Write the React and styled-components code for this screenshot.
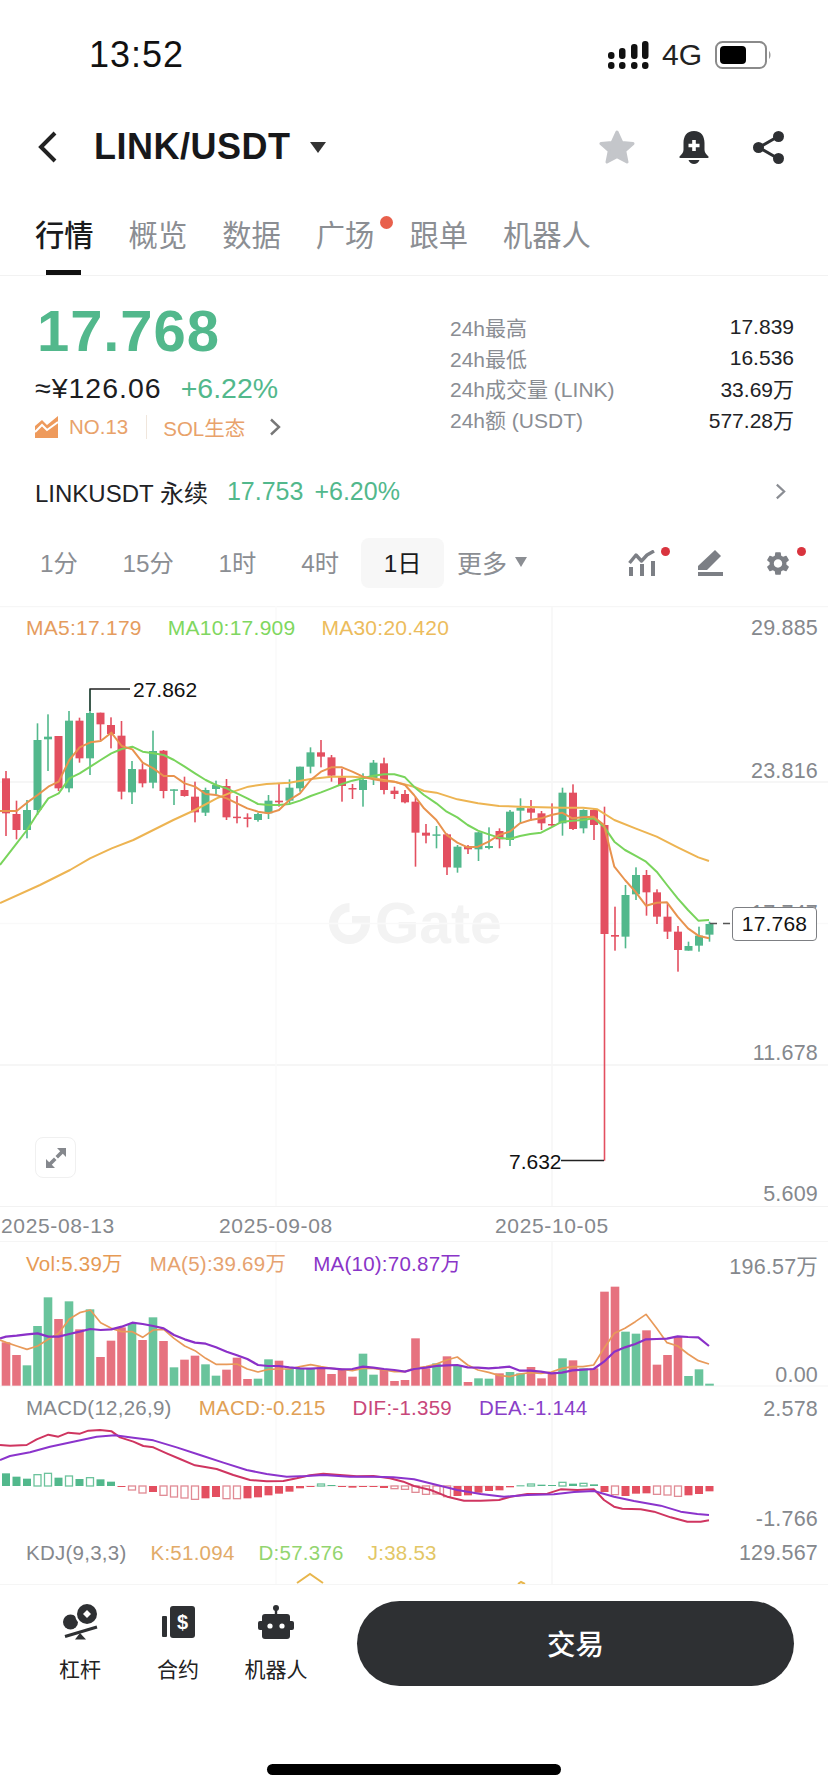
import React from "react";
import styled, { createGlobalStyle } from "styled-components";
import { MdSettings } from "react-icons/md";

const FONT = `"Liberation Sans", "Noto Sans CJK SC", sans-serif`;
const GREEN = "#52b88c";
const RED = "#e34f60";
const AXIS = "#85888d";
const DARK = "#2e3033";

// points were read off 3x crops of the chart, so convert them back to pane coordinates
const crop = (pts, dx, dy) => pts.map(([x, y]) => [x / 3 + dx, y / 3 + dy]);
const toPoints = (pts) => pts.map((p) => p.join(",")).join(" ");
const barX = (i) => 6 + 10.5 * i;

// high, body top, body bottom, low, up?
const candlesLeft = [
  [483, 505, 610, 678, 0], [572, 612, 660, 688, 0], [570, 600, 660, 685, 1], [340, 390, 600, 615, 1],
  [313, 380, 388, 483, 1], [378, 378, 535, 543, 0], [303, 332, 535, 547, 1], [323, 332, 445, 458, 0],
  [237, 309, 445, 495, 1], [308, 308, 343, 390, 0], [322, 345, 372, 415, 0], [333, 377, 545, 568, 0],
  [453, 477, 547, 582, 1], [460, 478, 520, 532, 0], [362, 423, 518, 535, 1], [420, 422, 543, 565, 0],
  [538, 538, 542, 585, 1], [500, 540, 558, 560, 0], [515, 560, 607, 637, 0], [533, 540, 608, 618, 1],
  [512, 525, 537, 552, 1], [507, 528, 622, 630, 0], [558, 620, 624, 640, 0], [610, 622, 627, 652, 0],
  [608, 612, 630, 635, 1], [555, 572, 610, 627, 1], [522, 572, 577, 590, 0], [508, 533, 572, 583, 1],
  [470, 470, 535, 545, 1], [412, 427, 470, 490, 1], [390, 427, 440, 472, 0], [435, 442, 497, 515, 0],
  [476, 502, 528, 575, 0], [522, 534, 538, 567, 0], [490, 510, 540, 590, 1], [450, 458, 505, 525, 1],
  [443, 460, 540, 553, 0], [530, 542, 552, 567, 0], [540, 552, 577, 580, 0],
];
const candlesRight = [
  [170, 185, 278, 380, 0], [252, 278, 287, 310, 0], [258, 283, 286, 325, 1], [280, 283, 382, 405, 0],
  [315, 320, 383, 398, 1], [315, 318, 328, 342, 0], [275, 277, 328, 363, 1], [262, 318, 324, 328, 1],
  [265, 273, 298, 325, 0], [210, 215, 300, 318, 1], [175, 203, 212, 250, 1], [180, 205, 218, 242, 0],
  [213, 220, 250, 270, 0], [190, 252, 255, 260, 0], [143, 158, 250, 287, 1], [133, 158, 267, 270, 0],
  [208, 210, 265, 280, 1], [205, 210, 255, 300, 0], [200, 255, 582, 1262, 0], [500, 585, 590, 632, 0],
  [435, 465, 590, 625, 1], [382, 405, 463, 480, 1], [390, 405, 457, 527, 0], [448, 457, 530, 552, 0],
  [490, 530, 575, 597, 0], [558, 575, 630, 695, 0], [605, 618, 632, 632, 1], [560, 587, 617, 635, 1],
  [545, 552, 584, 605, 1],
];
const candles = [
  ...candlesLeft.map((c) => [...c.slice(0, 4).map((v) => 4 + v / 3), c[4]]),
  ...candlesRight.map((c) => [...c.slice(0, 4).map((v) => 134 + v / 3), c[4]]),
];

const ma5 = [
  ...crop([[0,603],[50,603],[81,578],[113,555],[145,530],[176,515],[208,450],[239,412],[271,397],[302,393],[334,368],[365,408],[397,418],[428,458],[460,475],[491,498],[522,498],[554,520],[585,530],[617,552],[648,555],[680,565],[711,580],[742,595],[774,605],[805,610],[837,600],[868,570],[900,550],[932,510],[963,485],[994,472],[1026,472],[1057,485],[1089,500],[1120,508],[1152,513],[1183,515],[1215,525]], 0, 4),
  ...crop([[0,165],[30,205],[67,240],[98,285],[130,308],[161,322],[192,320],[224,305],[255,285],[287,275],[318,250],[349,240],[381,235],[412,225],[444,218],[475,235],[507,232],[539,230],[570,255],[601,380],[633,420],[664,455],[696,497],[728,488],[759,487],[791,530],[822,565],[853,587],[885,595]], 414, 134),
];
const ma10 = [
  ...crop([[0,765],[50,700],[81,660],[113,610],[145,565],[176,550],[208,505],[239,490],[271,470],[302,450],[334,430],[365,417],[397,410],[428,425],[460,430],[491,435],[522,450],[554,470],[585,490],[617,510],[648,525],[680,535],[711,550],[742,565],[774,582],[805,585],[837,585],[868,582],[900,572],[932,558],[963,547],[994,535],[1026,522],[1057,512],[1089,505],[1120,497],[1152,493],[1183,493],[1215,502]], 0, 4),
  ...crop([[0,140],[30,165],[67,190],[98,215],[130,232],[161,255],[192,272],[224,283],[255,293],[287,297],[318,288],[349,282],[381,278],[412,262],[444,245],[475,242],[507,240],[539,235],[570,260],[601,305],[633,330],[664,347],[696,365],[728,395],[759,435],[791,475],[822,510],[853,542],[885,540]], 414, 134),
];
const ma30 = [
  [0, 297], [40, 279], [70, 264],
  ...crop([[270,745],[335,715],[400,690],[460,660],[520,630],[585,600],[650,565],[700,545],[745,530],[800,522],[868,518],[932,507],[994,500],[1057,500],[1120,505],[1183,515]], 0, 4),
  ...crop([[0,140],[30,153],[67,158],[130,178],[192,190],[255,198],[318,200],[381,202],[444,203],[507,203],[550,208],[601,240],[664,265],[728,290],[791,322],[853,352],[885,363]], 414, 134),
];

// top of each volume bar, up?
const volumes = [
  [367,0],[405,0],[436,1],[318,1],[232,1],[297,0],[244,1],[328,0],[268,1],[411,0],[362,0],[322,0],[312,1],[360,0],[292,1],[363,0],[442,1],[419,0],[407,0],[433,1],[467,1],[449,0],[413,0],[477,0],[476,1],[418,1],[422,0],[447,1],[447,1],[447,1],[442,0],[462,0],[447,0],[470,0],[401,1],[464,1],[450,0],[483,0],[480,0],
  [355,0],[445,0],[430,1],[409,0],[437,1],[486,0],[475,1],[476,1],[460,0],[456,1],[460,1],[441,0],[475,0],[462,0],[415,1],[421,0],[445,1],[445,0],[215,0],[200,0],[335,1],[341,1],[331,0],[434,0],[405,0],[350,0],[468,1],[448,1],[491,1],
];
const volMa5 = [
  ...crop([[0,360],[18,367],[50,378],[81,388],[113,378],[145,358],[176,340],[208,297],[239,278],[271,270],[302,308],[334,325],[365,335],[397,335],[428,352],[460,330],[491,328],[522,355],[554,378],[585,392],[617,415],[648,433],[680,433],[711,432],[742,447],[774,456],[805,448],[837,447],[868,447],[900,440],[932,434],[963,440],[994,445],[1026,448],[1057,452],[1089,445],[1120,445],[1152,450],[1183,455],[1215,455]], 0, -22),
  ...crop([[0,445],[36,440],[67,432],[98,420],[130,411],[161,435],[192,450],[224,457],[255,466],[287,470],[318,462],[349,458],[381,460],[412,456],[444,445],[475,440],[507,440],[539,435],[570,385],[601,340],[633,325],[664,305],[696,283],[728,325],[759,368],[791,378],[822,402],[853,422],[885,432]], 414, -22),
];
const volMa10 = [
  ...crop([[0,355],[18,350],[50,347],[81,343],[113,340],[145,350],[176,350],[208,342],[239,335],[271,327],[302,330],[334,328],[365,320],[397,308],[428,312],[460,318],[491,325],[522,345],[554,358],[585,368],[617,371],[648,382],[680,395],[711,406],[742,417],[774,435],[805,438],[837,438],[868,442],[900,445],[932,446],[963,444],[994,445],[1026,448],[1057,447],[1089,440],[1120,443],[1152,447],[1183,450],[1215,455]], 0, -22),
  ...crop([[0,447],[36,443],[67,438],[98,436],[130,435],[161,442],[192,443],[224,445],[255,443],[287,440],[318,452],[349,452],[381,455],[412,460],[444,458],[475,451],[507,449],[539,447],[570,425],[601,395],[633,382],[664,372],[696,358],[728,357],[759,356],[791,349],[822,351],[853,352],[885,378]], 414, -22),
];

// macd histogram: far end of each bar from the zero line (288), hollow?
const macdBars = [
  [250],[260],[266],[254,1],[250,1],[263],[258,1],[267],[263,1],[268],[275],[291],[300,1],[309,1],[306],[316,1],[321,1],[324,1],[328,1],[325],[321],[326,1],[326,1],[325],[322],[316],[311],[305],[295],
  [288],[282,1],[285],[288],[293],[291],[288],[294],[296,1],[298,1],[307,1],[313,1],[312,1],[320,1],[318],[316],[308],[303],[301],[292],[286],[282,1],[284],[285],[277,1],[281],[280,1],[283],[306],[314,1],[318],[311],[310],[313,1],[315,1],[319,1],[316],[312],[304],
];
const dif = [
  ...crop([[0,165],[30,167],[80,165],[110,148],[145,134],[175,140],[205,128],[240,131],[265,122],[300,120],[335,124],[360,142],[400,155],[430,168],[460,172],[500,190],[540,207],[585,226],[620,232],[650,237],[700,255],[750,270],[800,274],[850,273],[890,265],[930,256],[970,251],[1020,255],[1070,259],[1120,258],[1170,265],[1210,275]], 0, 0),
  ...crop([[0,288],[50,300],[100,320],[150,332],[200,332],[255,330],[290,320],[340,312],[400,311],[440,298],[490,300],[540,298],[570,330],[600,350],[625,356],[680,358],[720,365],[770,382],[820,395],[860,395],[885,391]], 414, 0),
];
const dea = [
  ...crop([[0,210],[30,198],[90,187],[150,170],[220,155],[290,140],[345,136],[400,143],[460,151],[530,172],[600,195],[670,218],[740,240],[800,252],[860,260],[920,258],[970,255],[1050,260],[1120,260],[1180,262]], 0, 0),
  ...crop([[0,268],[60,283],[130,300],[200,312],[270,320],[340,315],[420,313],[480,306],[540,303],[600,320],[660,333],[740,347],[800,365],[850,372],[885,375]], 414, 0),
];

const Global = createGlobalStyle`
  html, body { margin: 0; padding: 0; background: #fff; }
  * { box-sizing: border-box; }
`;

const Page = styled.div`
  position: relative;
  width: 828px;
  height: 1792px;
  overflow: hidden;
  background: #fff;
  font-family: ${FONT};
  color: #1f2124;
  display: flex;
  flex-direction: column;
`;

/* status bar */
const StatusBar = styled.div`
  height: 110px;
  padding: 0 56px 0 89px;
  display: flex;
  align-items: center;
  justify-content: space-between;
`;
const Clock = styled.div`
  font-size: 36px;
  letter-spacing: 1px;
  color: #111;
`;
const StatusRight = styled.div`
  display: flex;
  align-items: center;
  gap: 13px;
`;
const Network = styled.div`
  font-size: 30px;
  color: #222;
`;

/* nav */
const NavBar = styled.div`
  height: 74px;
  padding: 0 44px 0 37px;
  display: flex;
  align-items: center;
`;
const Title = styled.div`
  margin-left: 37px;
  font-size: 36px;
  font-weight: 700;
  letter-spacing: 0.5px;
  color: #17181a;
`;
const NavCaret = styled.svg`
  margin-left: 19px;
`;
const NavActions = styled.div`
  margin-left: auto;
  display: flex;
  align-items: center;
  gap: 44px;
`;

/* tabs */
const Tabs = styled.div`
  height: 92px;
  padding-left: 35px;
  display: flex;
  gap: 35px;
  border-bottom: 1px solid #f2f2f2;
`;
const Tab = styled.div`
  position: relative;
  padding-top: 32px;
  font-size: 29.3px;
  line-height: 40px;
  color: ${(p) => (p.$active ? "#1a1b1d" : "#8b8e93")};
  font-weight: ${(p) => (p.$active ? 500 : 400)};

  ${(p) =>
    p.$active &&
    `&::after {
      content: "";
      position: absolute;
      left: 11px;
      bottom: 0;
      width: 35px;
      height: 5px;
      background: #111;
    }`}
`;
const TabDot = styled.span`
  position: absolute;
  top: 32px;
  right: -19px;
  width: 13px;
  height: 13px;
  border-radius: 50%;
  background: #e8604c;
`;

/* summary */
const Summary = styled.div`
  height: 186px;
  padding: 0 34px 0 35px;
  display: flex;
  justify-content: space-between;
`;
const PriceBlock = styled.div`
  padding-top: 28px;
`;
const BigPrice = styled.div`
  margin-left: 2px;
  font-size: 58px;
  line-height: 54px;
  font-weight: 700;
  letter-spacing: 0.9px;
  color: ${GREEN};
`;
const SubPrice = styled.div`
  margin-top: 12px;
  height: 36px;
  display: flex;
  align-items: center;
  gap: 19px;
  font-size: 28.5px;
`;
const Cny = styled.span`
  letter-spacing: 1px;
  color: #1c1d1f;
`;
const Change = styled.span`
  color: ${GREEN};
`;
const TagRow = styled.div`
  margin-top: 6px;
  height: 30px;
  display: flex;
  align-items: center;
  font-size: 20.5px;
  color: #e8a26b;
`;
const TagRank = styled.span`
  margin-left: 11px;
`;
const TagDivider = styled.span`
  width: 1px;
  height: 24px;
  margin: 0 16px 0 18px;
  background: #f0e6dc;
`;
const TagChevron = styled.svg`
  margin-left: 24px;
`;
const Stats = styled.div`
  width: 344px;
  padding-top: 35.5px;
`;
const StatRow = styled.div`
  height: 30.7px;
  display: flex;
  align-items: center;
  justify-content: space-between;
  font-size: 21px;
`;
const StatLabel = styled.span`
  color: #8a8d93;
`;
const StatValue = styled.span`
  color: #212225;
`;

/* perpetual link */
const PerpRow = styled.div`
  height: 60px;
  padding: 0 42px 2px 35px;
  display: flex;
  align-items: center;
  font-size: 25px;
`;
const PerpName = styled.span`
  font-size: 24px;
  color: #212225;
`;
const PerpPrice = styled.span`
  margin-left: ${(p) => p.$gap}px;
  color: ${GREEN};
`;
const PerpChevron = styled.svg`
  margin-left: auto;
`;

/* timeframes */
const TimeBar = styled.div`
  height: 84px;
  padding: 0 36px 2px 17.5px;
  display: flex;
  align-items: center;
`;
const TimeItem = styled.div`
  height: 50px;
  padding: 0 22.4px 3px;
  display: flex;
  align-items: center;
  font-size: 24.3px;
  border-radius: 8px;
  color: ${(p) => (p.$active ? "#1a1b1d" : "#8b8e93")};
  background: ${(p) => (p.$active ? "#f7f7f7" : "transparent")};
`;
const MoreItem = styled.div`
  margin-left: 13px;
  padding-bottom: 3px;
  display: flex;
  align-items: center;
  gap: 8px;
  font-size: 25px;
  color: #8b8e93;
`;
const TimeTools = styled.div`
  margin-left: auto;
  display: flex;
  align-items: center;
  gap: 40px;
`;
const ToolSlot = styled.div`
  position: relative;
  width: 28px;
  height: 28px;
  display: flex;
  align-items: center;
  justify-content: center;
  color: #7c7f85;
`;
const RedDot = styled.span`
  position: absolute;
  top: -2px;
  right: -14px;
  width: 9px;
  height: 9px;
  border-radius: 50%;
  background: #d9343e;
`;

/* chart panes */
const Charts = styled.div`
  height: 978px;
  overflow: hidden;
`;
const Pane = styled.div`
  position: relative;
  height: ${(p) => p.$height}px;
  padding-top: ${(p) => p.$top}px;
`;
const PaneSvg = styled.svg`
  position: absolute;
  left: 0;
  top: 0;
`;
const Legend = styled.div`
  position: relative;
  padding-left: 26px;
  display: flex;
  gap: ${(p) => p.$gap}px;
  font-size: ${(p) => p.$size}px;
  line-height: 24px;
  letter-spacing: 0.25px;
`;
const LegendItem = styled.span`
  color: ${(p) => p.$color};
`;
const AxisLabel = styled.div`
  position: absolute;
  right: 10px;
  top: ${(p) => p.$y}px;
  transform: translateY(-50%);
  font-size: 21.5px;
  letter-spacing: 0.2px;
  color: ${AXIS};
`;
const Callout = styled.div`
  position: absolute;
  left: ${(p) => p.$x}px;
  top: ${(p) => p.$y}px;
  transform: translateY(-50%);
  font-size: 21px;
  color: #111;
`;
const PriceTag = styled.div`
  position: absolute;
  left: 732px;
  top: 301px;
  width: 85px;
  height: 34px;
  display: flex;
  align-items: center;
  justify-content: center;
  background: #fff;
  border: 1px solid #7d7f83;
  border-radius: 4px;
  font-size: 21px;
  letter-spacing: 0.2px;
  color: #111;
`;
const Watermark = styled.div`
  position: absolute;
  left: 329px;
  top: 286px;
  display: flex;
  align-items: center;
  gap: 5px;
  font-size: 57px;
  font-weight: 700;
  line-height: 62px;
  color: #f3f3f3;
`;
const ExpandButton = styled.div`
  position: absolute;
  left: 35px;
  top: 531px;
  width: 41px;
  height: 41px;
  display: flex;
  align-items: center;
  justify-content: center;
  background: #fff;
  border: 1.5px solid #f0f0f0;
  border-radius: 8px;
`;
const DateAxis = styled.div`
  position: relative;
  height: 36px;
  border-top: 1px solid #f2f2f2;
  border-bottom: 1px solid #f5f5f5;
`;
const DateLabel = styled.span`
  position: absolute;
  left: ${(p) => p.$x}px;
  top: 6px;
  font-size: 21px;
  line-height: 26px;
  letter-spacing: 0.65px;
  color: ${AXIS};
`;

/* bottom bar */
const BottomBar = styled.div`
  flex: 1;
  border-top: 1px solid #f5f5f5;
  display: flex;
  flex-direction: column;
  align-items: center;
`;
const BottomRow = styled.div`
  width: 100%;
  padding: 16px 0 0 31px;
  display: flex;
`;
const Action = styled.div`
  width: 98px;
  display: flex;
  flex-direction: column;
  align-items: center;
`;
const ActionIcon = styled.div`
  height: 42px;
  display: flex;
  align-items: center;
`;
const ActionLabel = styled.div`
  margin-top: 13px;
  font-size: 21px;
  line-height: 28px;
  color: #222;
  white-space: nowrap;
`;
const TradeButton = styled.div`
  width: 437px;
  height: 85px;
  margin-left: 32px;
  padding-bottom: 3px;
  display: flex;
  align-items: center;
  justify-content: center;
  border-radius: 43px;
  background: ${DARK};
  color: #fff;
  font-size: 28.5px;
  font-weight: 500;
`;
const HomeIndicator = styled.div`
  width: 294px;
  height: 11px;
  margin-top: 78px;
  border-radius: 6px;
  background: #000;
`;

const SignalIcon = () => (
  <svg width="41" height="28" viewBox="0 0 41 28" fill="#111">
    <rect x="0" y="11" width="6.5" height="7" rx="3" />
    <rect x="0" y="21" width="6.5" height="7" rx="3" />
    <rect x="11" y="7" width="6.5" height="11" rx="3" />
    <rect x="11" y="21" width="6.5" height="7" rx="3" />
    <rect x="23" y="3" width="6.5" height="15" rx="3" />
    <rect x="23" y="21" width="6.5" height="7" rx="3" />
    <rect x="34" y="0" width="6.5" height="18" rx="3" />
    <rect x="34" y="21" width="6.5" height="7" rx="3" />
  </svg>
);

const BatteryIcon = () => (
  <svg width="57" height="28" viewBox="0 0 57 28">
    <rect x="1" y="1" width="50" height="26" rx="6.5" fill="#fff" stroke="#8a8a8a" strokeWidth="2" />
    <rect x="5" y="5" width="26" height="18" rx="4" fill="#000" />
    <path d="M54 10 C56 11.5 56 16.5 54 18 Z" fill="#9a9a9a" />
  </svg>
);

const BellIcon = () => (
  <svg width="30" height="33" viewBox="0 0 30 33">
    <path
      d="M15 0 C7.5 0 4.5 5.5 4.5 12 L4.5 19 C4.5 22 2 24 0.5 25.5 Q0 27 1.5 27 L28.5 27 Q30 27 29.5 25.5 C28 24 25.5 22 25.5 19 L25.5 12 C25.5 5.5 22.5 0 15 0 Z"
      fill={DARK}
    />
    <path d="M9.5 29 L20.5 29 C19.5 31.5 17.5 33 15 33 C12.5 33 10.5 31.5 9.5 29 Z" fill={DARK} />
    <path d="M13.2 9 H16.8 V12.7 H20.5 V16.3 H16.8 V20 H13.2 V16.3 H9.5 V12.7 H13.2 Z" fill="#fff" />
  </svg>
);

const ShareIcon = () => (
  <svg width="31" height="33" viewBox="0 0 31 33" fill={DARK}>
    <path d="M25 5.5 L6 16.5 L25 27.5" fill="none" stroke={DARK} strokeWidth="3" />
    <circle cx="25.5" cy="5.5" r="5.5" />
    <circle cx="5.5" cy="16.5" r="5.5" />
    <circle cx="25.5" cy="27.5" r="5.5" />
  </svg>
);

const Chevron = ({ as: Comp = "svg", color = "#777", width = 12, height = 18, ...rest }) => (
  <Comp width={width} height={height} viewBox="0 0 12 18" {...rest}>
    <polyline points="2,1.5 10,9 2,16.5" fill="none" stroke={color} strokeWidth="2.4" />
  </Comp>
);

const GateLogo = () => (
  <svg width="41" height="41" viewBox="0 0 41 41">
    <path
      d="M20.5 0 L20.5 9 A11.5 11.5 0 1 0 32 20.5 L23 20.5 L23 13 L41 13 L41 20.5 A20.5 20.5 0 1 1 20.5 0 Z"
      fill="#f3f3f3"
    />
  </svg>
);

const KlineChart = () => (
  <PaneSvg width="828" height="600" viewBox="0 0 828 600">
    <line x1="0" x2="828" y1="0.5" y2="0.5" stroke="#f6f6f6" strokeWidth="1.5" />
    <line x1="0" x2="828" y1="176" y2="176" stroke="#f3f3f3" strokeWidth="1.5" />
    <line x1="0" x2="828" y1="317.5" y2="317.5" stroke="#f9f9f9" strokeWidth="1.5" />
    <line x1="0" x2="828" y1="459" y2="459" stroke="#f3f3f3" strokeWidth="1.5" />
    <line x1="276" x2="276" y1="0" y2="600" stroke="#fafafa" strokeWidth="1.5" />
    <line x1="552" x2="552" y1="0" y2="600" stroke="#f6f6f6" strokeWidth="1.5" />
    {candles.map(([high, top, bottom, low, up], i) => (
      <g key={i} fill={up ? GREEN : RED}>
        <rect x={barX(i) - 0.8} y={high} width="1.6" height={low - high} />
        <rect x={barX(i) - 4} y={top} width="8" height={Math.max(bottom - top, 1.5)} />
      </g>
    ))}
    <polyline points={toPoints(ma30)} fill="none" stroke="#edb452" strokeWidth="2" strokeLinejoin="round" />
    <polyline points={toPoints(ma10)} fill="none" stroke="#79d45c" strokeWidth="2" strokeLinejoin="round" />
    <polyline points={toPoints(ma5)} fill="none" stroke="#e8934e" strokeWidth="2" strokeLinejoin="round" />
    <polyline points="90,105 90,83 130,83" fill="none" stroke="#222" strokeWidth="1.3" />
    <line x1="561" x2="604" y1="554.5" y2="554.5" stroke="#222" strokeWidth="1.3" />
    <line x1="710" x2="732" y1="317.5" y2="317.5" stroke="#555" strokeWidth="1.5" strokeDasharray="7 6" />
  </PaneSvg>
);

const VolumeChart = () => (
  <PaneSvg width="828" height="148" viewBox="0 0 828 148">
    <line x1="276" x2="276" y1="0" y2="148" stroke="#fafafa" strokeWidth="1.5" />
    <line x1="552" x2="552" y1="0" y2="148" stroke="#f6f6f6" strokeWidth="1.5" />
    <line x1="0" x2="828" y1="144" y2="144" stroke="#f7f7f7" strokeWidth="1.5" />
    {volumes.map(([top, up], i) => (
      <rect
        key={i}
        x={barX(i) - 4.3}
        y={top / 3 - 22}
        width="8.6"
        height={(497 - top) / 3}
        fill={up ? "#69c49c" : "#e6727f"}
      />
    ))}
    <polyline points={toPoints(volMa5)} fill="none" stroke="#e89a5a" strokeWidth="1.7" strokeLinejoin="round" />
    <polyline points={toPoints(volMa10)} fill="none" stroke="#8a30c8" strokeWidth="2.2" strokeLinejoin="round" />
  </PaneSvg>
);

const MacdChart = () => (
  <PaneSvg width="828" height="145" viewBox="0 0 828 145">
    <line x1="276" x2="276" y1="0" y2="145" stroke="#fafafa" strokeWidth="1.5" />
    <line x1="552" x2="552" y1="0" y2="145" stroke="#f6f6f6" strokeWidth="1.5" />
    <line x1="305" x2="500" y1="96" y2="96" stroke="#e9e3e3" strokeWidth="1" />
    {macdBars.map(([end, hollow], i) => {
      const up = end < 288;
      const color = up ? GREEN : RED;
      const y = Math.min(end, 288) / 3;
      const h = Math.max(Math.abs(end - 288) / 3, 1);
      return hollow ? (
        <rect key={i} x={barX(i) - 3.5} y={y} width="7" height={h} fill="#fff" stroke={up ? "#6cc39c" : "#e08a94"} strokeWidth="1.3" />
      ) : (
        <rect key={i} x={barX(i) - 4} y={y} width="8" height={h} fill={color} />
      );
    })}
    <polyline points={toPoints(dif)} fill="none" stroke="#cf3560" strokeWidth="2" strokeLinejoin="round" />
    <polyline points={toPoints(dea)} fill="none" stroke="#8b34cc" strokeWidth="2" strokeLinejoin="round" />
  </PaneSvg>
);

const KdjChart = () => (
  <PaneSvg width="828" height="49" viewBox="0 0 828 49">
    <line x1="276" x2="276" y1="0" y2="49" stroke="#fafafa" strokeWidth="1.5" />
    <line x1="552" x2="552" y1="0" y2="49" stroke="#f6f6f6" strokeWidth="1.5" />
    <polyline points="297,48 310,39 323,48" fill="none" stroke="#e8b64c" strokeWidth="2" />
    <polyline points="518,49 521,47 525,49" fill="none" stroke="#e8b64c" strokeWidth="2" />
  </PaneSvg>
);

const stats = [
  ["24h最高", "17.839"],
  ["24h最低", "16.536"],
  ["24h成交量 (LINK)", "33.69万"],
  ["24h额 (USDT)", "577.28万"],
];

const App = () => {
  return (
    <Page>
      <Global />
      <StatusBar>
        <Clock>13:52</Clock>
        <StatusRight>
          <SignalIcon />
          <Network>4G</Network>
          <BatteryIcon />
        </StatusRight>
      </StatusBar>

      <NavBar>
        <svg width="20" height="32" viewBox="0 0 20 32">
          <polyline points="18,2 4,16 18,30" fill="none" stroke="#222" strokeWidth="4" />
        </svg>
        <Title>LINK/USDT</Title>
        <NavCaret width="16" height="11" viewBox="0 0 16 11">
          <polygon points="0,0 16,0 8,11" fill="#333" />
        </NavCaret>
        <NavActions>
          <svg width="36" height="34" viewBox="0 0 36 34">
            <polygon
              points="18,2 22.8,12.4 34,13.6 25.8,21 28,32 18,26.6 8,32 10.2,21 2,13.6 13.2,12.4"
              fill="#c4c6ca"
              stroke="#c4c6ca"
              strokeWidth="3"
              strokeLinejoin="round"
            />
          </svg>
          <BellIcon />
          <ShareIcon />
        </NavActions>
      </NavBar>

      <Tabs>
        <Tab $active>行情</Tab>
        <Tab>概览</Tab>
        <Tab>数据</Tab>
        <Tab>
          广场
          <TabDot />
        </Tab>
        <Tab>跟单</Tab>
        <Tab>机器人</Tab>
      </Tabs>

      <Summary>
        <PriceBlock>
          <BigPrice>17.768</BigPrice>
          <SubPrice>
            <Cny>≈¥126.06</Cny>
            <Change>+6.22%</Change>
          </SubPrice>
          <TagRow>
            <svg width="23" height="22" viewBox="0 0 23 22" fill="#ee9a5c">
              <path d="M0 10 L7 4 L12 9 L23 0 L23 22 L0 22 Z" />
              <path d="M0 16 L7 9 L12 14 L23 6" fill="none" stroke="#fff" strokeWidth="2" />
            </svg>
            <TagRank>NO.13</TagRank>
            <TagDivider />
            <span>SOL生态</span>
            <Chevron as={TagChevron} />
          </TagRow>
        </PriceBlock>
        <Stats>
          {stats.map(([label, value]) => (
            <StatRow key={label}>
              <StatLabel>{label}</StatLabel>
              <StatValue>{value}</StatValue>
            </StatRow>
          ))}
        </Stats>
      </Summary>

      <PerpRow>
        <PerpName>LINKUSDT 永续</PerpName>
        <PerpPrice $gap={19}>17.753</PerpPrice>
        <PerpPrice $gap={11}>+6.20%</PerpPrice>
        <Chevron as={PerpChevron} width={11} height={21} color="#8a8d93" />
      </PerpRow>

      <TimeBar>
        <TimeItem>1分</TimeItem>
        <TimeItem>15分</TimeItem>
        <TimeItem>1时</TimeItem>
        <TimeItem>4时</TimeItem>
        <TimeItem $active>1日</TimeItem>
        <MoreItem>
          更多
          <svg width="12" height="10" viewBox="0 0 12 10">
            <polygon points="0,0 12,0 6,10" fill="#8b8e93" />
          </svg>
        </MoreItem>
        <TimeTools>
          <ToolSlot>
            <svg width="28" height="26" viewBox="0 0 28 26">
              <polyline points="1.5,13 8,5 13.5,11 19,5 26,1" fill="none" stroke="#7c7f85" strokeWidth="3.4" strokeLinejoin="round" />
              <rect x="1" y="17" width="4" height="9" fill="#7c7f85" />
              <rect x="12" y="14" width="4" height="12" fill="#7c7f85" />
              <rect x="23" y="11" width="4" height="15" fill="#7c7f85" />
            </svg>
            <RedDot />
          </ToolSlot>
          <ToolSlot>
            <svg width="27" height="26" viewBox="0 0 27 26" fill="#7c7f85">
              <path d="M18 0 L24 6 L10 20 L1 20 L1 16 Z" />
              <rect x="1" y="22" width="25" height="4" />
            </svg>
          </ToolSlot>
          <ToolSlot>
            <MdSettings size={33} />
            <RedDot />
          </ToolSlot>
        </TimeTools>
      </TimeBar>

      <Charts>
        <Pane $height={600} $top={10}>
          <Watermark>
            <GateLogo />
            Gate
          </Watermark>
          <KlineChart />
          <Legend $gap={26} $size={21}>
            <LegendItem $color="#e59c5e">MA5:17.179</LegendItem>
            <LegendItem $color="#7fd760">MA10:17.909</LegendItem>
            <LegendItem $color="#ecbc5c">MA30:20.420</LegendItem>
          </Legend>
          <AxisLabel $y={22}>29.885</AxisLabel>
          <AxisLabel $y={165}>23.816</AxisLabel>
          <AxisLabel $y={307}>17.747</AxisLabel>
          <AxisLabel $y={447}>11.678</AxisLabel>
          <AxisLabel $y={588}>5.609</AxisLabel>
          <Callout $x={133} $y={84}>27.862</Callout>
          <Callout $x={509} $y={556}>7.632</Callout>
          <PriceTag>17.768</PriceTag>
          <ExpandButton>
            <svg width="20" height="20" viewBox="0 0 20 20" fill="#85888d">
              <polygon points="11,0 20,0 20,9 16.8,5.8 12,10.5 9.5,8 14.2,3.2" />
              <polygon points="9,20 0,20 0,11 3.2,14.2 8,9.5 10.5,12 5.8,16.8" />
            </svg>
          </ExpandButton>
        </Pane>

        <DateAxis>
          <DateLabel $x={1}>2025-08-13</DateLabel>
          <DateLabel $x={219}>2025-09-08</DateLabel>
          <DateLabel $x={495}>2025-10-05</DateLabel>
        </DateAxis>

        <Pane $height={148} $top={10}>
          <VolumeChart />
          <Legend $gap={27} $size={20.5}>
            <LegendItem $color="#e69a55">Vol:5.39万</LegendItem>
            <LegendItem $color="#e6a26f">MA(5):39.69万</LegendItem>
            <LegendItem $color="#8a35c8">MA(10):70.87万</LegendItem>
          </Legend>
          <AxisLabel $y={22}>196.57万</AxisLabel>
          <AxisLabel $y={133}>0.00</AxisLabel>
        </Pane>

        <Pane $height={145} $top={6}>
          <MacdChart />
          <Legend $gap={27} $size={20.5}>
            <LegendItem $color="#85888d">MACD(12,26,9)</LegendItem>
            <LegendItem $color="#e0a055">MACD:-0.215</LegendItem>
            <LegendItem $color="#c8477a">DIF:-1.359</LegendItem>
            <LegendItem $color="#8a3fc8">DEA:-1.144</LegendItem>
          </Legend>
          <AxisLabel $y={19}>2.578</AxisLabel>
          <AxisLabel $y={129}>-1.766</AxisLabel>
        </Pane>

        <Pane $height={49} $top={6}>
          <KdjChart />
          <Legend $gap={24} $size={20.5}>
            <LegendItem $color="#85888d">KDJ(9,3,3)</LegendItem>
            <LegendItem $color="#e2ab68">K:51.094</LegendItem>
            <LegendItem $color="#93d56f">D:57.376</LegendItem>
            <LegendItem $color="#e3c766">J:38.53</LegendItem>
          </Legend>
          <AxisLabel $y={18}>129.567</AxisLabel>
        </Pane>
      </Charts>

      <BottomBar>
        <BottomRow>
          <Action>
            <ActionIcon>
              <svg width="36" height="36" viewBox="0 0 36 36">
                <circle cx="8.5" cy="18" r="7.5" fill={DARK} />
                <circle cx="25" cy="10" r="12" fill="#fff" />
                <circle cx="25" cy="10" r="10" fill={DARK} />
                <polygon points="25,6 29,10 25,14 21,10" fill="#fff" />
                <line x1="3" y1="32.5" x2="35" y2="23" stroke={DARK} strokeWidth="3" />
                <polygon points="18,29 24,35.5 13,35.5" fill={DARK} />
              </svg>
            </ActionIcon>
            <ActionLabel>杠杆</ActionLabel>
          </Action>
          <Action>
            <ActionIcon>
              <svg width="33" height="32" viewBox="0 0 33 32" fontFamily={FONT}>
                <rect x="0" y="10" width="5" height="21" rx="1" fill={DARK} />
                <rect x="8" y="0" width="25" height="32" rx="3" fill={DARK} />
                <text x="20.5" y="23" textAnchor="middle" fontSize="20" fontWeight="700" fill="#fff">$</text>
              </svg>
            </ActionIcon>
            <ActionLabel>合约</ActionLabel>
          </Action>
          <Action>
            <ActionIcon>
              <svg width="36" height="34" viewBox="0 0 36 34" fill={DARK}>
                <circle cx="18" cy="3" r="3" />
                <rect x="16.8" y="4" width="2.4" height="6" />
                <rect x="4" y="9" width="28" height="25" rx="3" />
                <rect x="0" y="16" width="6" height="9" rx="2" />
                <rect x="30" y="16" width="6" height="9" rx="2" />
                <circle cx="12" cy="21" r="2.6" fill="#fff" />
                <circle cx="24" cy="21" r="2.6" fill="#fff" />
              </svg>
            </ActionIcon>
            <ActionLabel>机器人</ActionLabel>
          </Action>
          <TradeButton>交易</TradeButton>
        </BottomRow>
        <HomeIndicator />
      </BottomBar>
    </Page>
  );
};

export default App;
